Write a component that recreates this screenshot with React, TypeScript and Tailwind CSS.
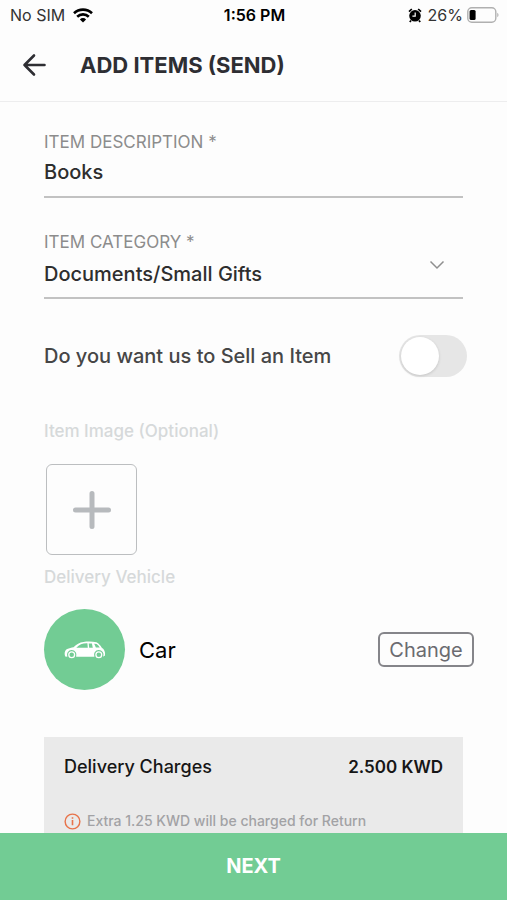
import { useState } from "react";

function StatusBar() {
  return (
    <div className="grid h-7 shrink-0 grid-cols-3 items-center pr-2 pl-2.5 pt-0.5 text-black">
      <div className="flex items-center gap-2 text-[16px] leading-6 text-[#333]">
        No SIM
        <svg viewBox="0 0 20 15" className="h-[15px] w-5" fill="none" stroke="#000" strokeWidth="2.6">
          <path d="M1 5.2a13 13 0 0 1 18 0" />
          <path d="M4.2 8.7a8.3 8.3 0 0 1 11.6 0" />
          <path d="M10 14.6 6.9 11.4a4.4 4.4 0 0 1 6.2 0Z" fill="#000" stroke="none" />
        </svg>
      </div>
      <div className="text-center text-[16px] leading-6 font-semibold">1:56 PM</div>
      <div className="flex items-center justify-end gap-1 text-[16px] leading-6 text-[#333]">
        <svg viewBox="0 0 14 15" className="mr-0.5 h-[15px] w-3.5" fill="none">
          <circle cx="7" cy="7.8" r="5.8" fill="#000" />
          <path d="M1 3.6 3.8 1M13 3.6 10.2 1M3 12.5l-1.2 1.6M11 12.5l1.2 1.6" stroke="#000" strokeWidth="1.7" />
          <path d="M7.2 4.5v3.6H4.4" stroke="#fff" strokeWidth="1.2" />
        </svg>
        26%
        <svg viewBox="0 0 32 16" className="h-4 w-8" fill="none">
          <rect x="0.8" y="0.8" width="28" height="14.4" rx="4" stroke="#b0b0b0" strokeWidth="1.4" />
          <rect x="2.6" y="3" width="6" height="10" rx="1.5" fill="#000" />
          <path d="M30.4 5.8c1.4.7 1.4 3.7 0 4.4Z" fill="#a3a3a3" />
        </svg>
      </div>
    </div>
  );
}

function CarIcon() {
  return (
    <svg viewBox="0 0 42 18" className="h-[18px] w-[42px]">
      <path
        fill="#fff"
        fillRule="evenodd"
        d="M1.200 15.600C.200 12.500.600 9.500 3.200 8.100c2-1.100 4.300-1.400 6.300-1.900C12.500 3.300 15.500 1.300 19.500.900c4-.500 9-.500 13 .300 2.300 1.300 4 3.200 5.300 5.500 2.500 1.500 3.700 4.400 3.200 7.700l-1.500 1.100h-.300a4.800 4.800 0 1 0-8.800.200H12.100a4.800 4.800 0 1 0-8.800 0ZM12.300 6.700h11.500l-.400-4.400c-4.500-.200-7.900 1-11.100 4.400ZM25.200 6.700h3.600l-.900-4.300h-3.200ZM30.200 2.700l1.700 3.900 3.900-.200c-.900-1.500-1.900-2.600-3.100-3.500Z"
      />
      <circle cx="7.700" cy="13.700" r="2.900" fill="none" stroke="#fff" strokeWidth="1.300" />
      <circle cx="34.800" cy="13.700" r="2.900" fill="none" stroke="#fff" strokeWidth="1.300" />
    </svg>
  );
}

export default function App() {
  const [description, setDescription] = useState("Books");
  const [category, setCategory] = useState("Documents/Small Gifts");
  const [sell, setSell] = useState(false);

  return (
    <div className="flex h-dvh flex-col bg-[#fdfdfd] font-['Inter','Liberation_Sans',sans-serif]">
      <StatusBar />
      <header className="flex h-[74px] shrink-0 items-center gap-8 border-b border-[#ededee] pl-[22px]">
        <button type="button" aria-label="Back" className="text-[#2e2e33]">
          <svg viewBox="0 0 26 24" className="h-6 w-[26px]" fill="none" stroke="currentColor" strokeWidth="2.600" strokeLinecap="round" strokeLinejoin="round">
            <path d="M12 2.500 2.500 12 12 21.500M2.500 12H22.500" />
          </svg>
        </button>
        <h1 className="text-[22px] leading-7 font-bold text-[#2e2e33]">ADD ITEMS (SEND)</h1>
      </header>

      <main className="min-h-0 flex-1 overflow-y-auto pt-7 [scrollbar-width:none]">
        <div className="flex flex-col gap-8 px-11">
          <div>
            <label htmlFor="description" className="block text-[17px] leading-6 text-[#8c8c8c]">
              ITEM DESCRIPTION *
            </label>
            <input
              id="description"
              value={description}
              onChange={(e) => setDescription(e.target.value)}
              className="block h-11 w-full border-b-2 border-[#c2c2c2] bg-transparent pb-1.5 text-[20px] font-medium text-[#2e2e2e] outline-none"
            />
          </div>
          <div>
            <label htmlFor="category" className="block text-[17px] leading-6 text-[#8c8c8c]">
              ITEM CATEGORY *
            </label>
            <div className="relative">
              <select
                id="category"
                value={category}
                onChange={(e) => setCategory(e.target.value)}
                className="block h-[45px] w-full appearance-none border-b-2 border-[#c2c2c2] bg-transparent pb-1 text-[20px] font-medium text-[#2e2e2e] outline-none"
              >
                <option>Documents/Small Gifts</option>
              </select>
              <svg viewBox="0 0 16 10" className="pointer-events-none absolute top-1.5 right-[18px] h-2.5 w-4" fill="none" stroke="#8f8f8f" strokeWidth="1.500">
                <path d="m1.500 1.500 6.500 6.500 6.500-6.500" />
              </svg>
            </div>
          </div>
        </div>

        <div className="mt-9 flex items-center justify-between pr-10 pl-11">
          <label htmlFor="sell" className="text-[20px] leading-6 font-medium text-[#464646]">
            Do you want us to Sell an Item
          </label>
          <input
            id="sell"
            type="checkbox"
            role="switch"
            checked={sell}
            onChange={(e) => setSell(e.target.checked)}
            className="h-[42px] w-[68px] shrink-0 appearance-none rounded-full bg-[#e6e6e6] p-0.5 before:block before:size-[38px] before:rounded-full before:bg-white before:shadow-[0_1px_3px_rgba(0,0,0,0.15)] checked:bg-[#72cc94] checked:before:ml-[26px]"
          />
        </div>

        <section className="mt-[42px] px-11">
          <h2 className="text-[17px] leading-6 font-medium text-[#d6d9da]">Item Image (Optional)</h2>
          <button
            type="button"
            aria-label="Add item image"
            className="mt-[21px] ml-0.5 flex size-[91px] items-center justify-center rounded-md border border-[#bcbec0] text-[#b7babd]"
          >
            <svg viewBox="0 0 40 40" className="size-10" fill="none" stroke="currentColor" strokeWidth="5" strokeLinecap="round">
              <path d="M20 3.500v33M3.500 20h33" />
            </svg>
          </button>
        </section>

        <section className="mt-2.5 pr-[33px] pl-11">
          <h2 className="text-[17px] leading-6 font-medium text-[#d6d9da]">Delivery Vehicle</h2>
          <div className="mt-5 flex items-center">
            <div className="flex size-[81px] shrink-0 items-center justify-center rounded-full bg-[#72cc94]">
              <CarIcon />
            </div>
            <span className="ml-3.5 flex-1 text-[22px] leading-7 text-black">Car</span>
            <button
              type="button"
              className="h-[35px] w-[96px] rounded-md border-2 border-[#85858a] text-[20px] leading-6 text-[#6b6b70]"
            >
              Change
            </button>
          </div>
        </section>

        <section className="mx-11 mt-[47px] bg-[#eaeaea] px-5 pt-[18px] pb-5">
          <div className="flex items-center justify-between leading-6 text-[#161616]">
            <span className="text-[18px] font-medium">Delivery Charges</span>
            <span className="text-[17px] font-semibold">2.500 KWD</span>
          </div>
          <p className="mt-[30px] flex items-center gap-1.5 text-[14px] leading-6 font-medium text-[#a2a2a5]">
            <svg viewBox="0 0 18 18" className="size-[17px] shrink-0" fill="none" stroke="#e8734a" strokeWidth="1.500">
              <circle cx="9" cy="9" r="7.800" />
              <path d="M9 7.500v5.500M9 4.500v1.600" strokeWidth="1.700" />
            </svg>
            Extra 1.25 KWD will be charged for Return
          </p>
        </section>
      </main>

      <button type="button" className="h-[67px] shrink-0 bg-[#72cc94] pb-0.5 text-[20px] leading-6 font-bold text-white">
        NEXT
      </button>
    </div>
  );
}
